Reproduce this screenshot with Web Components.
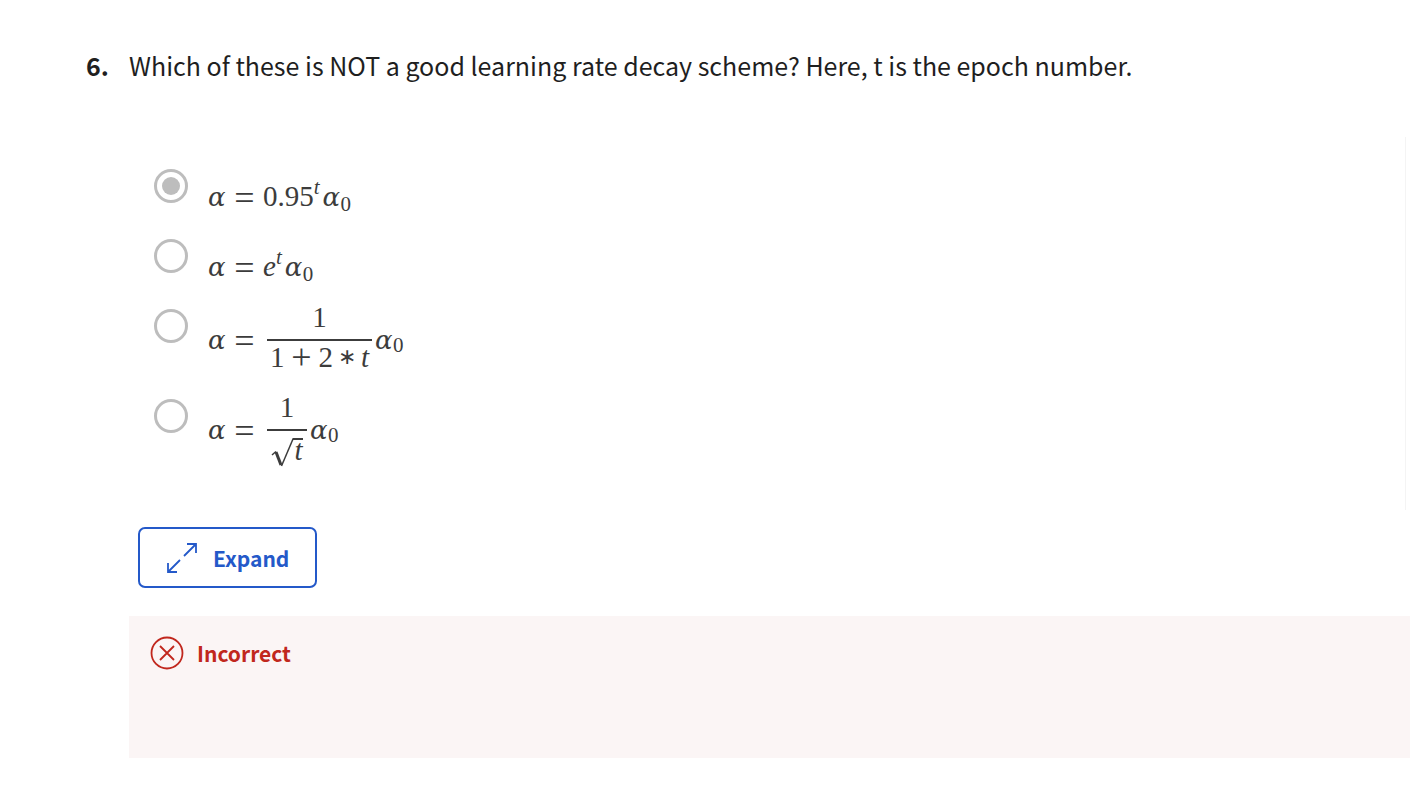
<!DOCTYPE html>
<html lang="en">
<head>
<meta charset="utf-8">
<meta name="viewport" content="width=device-width, initial-scale=1">
<title>Quiz question</title>
<style>
body { margin: 0; background: #fff; color: #1f1f1f; font-family: "Noto Sans CJK SC", "Open Sans", sans-serif; }
</style>
</head>
<body>
<quiz-question>
  <span slot="number">6.</span>
  <span slot="prompt">Which of these is NOT a good learning rate decay scheme? Here, t is the epoch number.</span>
  <quiz-options slot="options"></quiz-options>
  <expand-button slot="action">Expand</expand-button>
  <quiz-feedback slot="feedback">Incorrect</quiz-feedback>
</quiz-question>

<script>
const define = (name, html) => customElements.define(name, class extends HTMLElement {
  constructor() {
    super();
    this.attachShadow({ mode: "open" }).innerHTML = html;
  }
});

define("quiz-question", `
<style>
  :host { display: block; padding: 47px 0 38px 86px; }
  header { display: grid; grid-template-columns: 43px 1fr; font-size: 25px; line-height: 36px; }
  h2 { margin: 0; font: inherit; }
  .num { font-weight: 700; }
  .options { margin: 54px 4px 0 0; }
  .action { padding: 17px 0 0 52px; }
  .feedback { margin: 28px 0 0 43px; }
</style>
<header><span class="num"><slot name="number"></slot></span><h2><slot name="prompt"></slot></h2></header>
<div class="options"><slot name="options"></slot></div>
<div class="action"><slot name="action"></slot></div>
<div class="feedback"><slot name="feedback"></slot></div>
`);

define("math-frac", `
<style>
  :host { display: flex; flex-direction: column; align-items: stretch; text-align: center; margin: 0 3px 0 4px; }
  .top { padding-bottom: 6px; }
  .bottom { display: flex; justify-content: center; border-top: 2px solid #3c3c3c; }
</style>
<div class="top"><slot name="top"></slot></div>
<div class="bottom"><slot name="bottom"></slot></div>
`);

define("math-root", `
<style>
  :host { display: flex; padding: 0 3px 0 4px; }
  svg { display: block; overflow: visible; width: 33px; height: 32px; margin-right: -12px; }
  span { padding: 3px 0 0 1px; width: 11px; height: 29px; }
</style>
<svg viewBox="0 0 33 32" fill="none" stroke="#3c3c3c" aria-hidden="true">
  <path d="M1 24L5 20.5" stroke-width="1.5"/><path d="M5 21L10 34" stroke-width="3"/><path d="M10.5 35L22 8" stroke-width="1.5"/><path d="M21.5 8H32" stroke-width="2"/>
</svg><span><slot></slot></span>
`);

define("quiz-options", `
<style>
  :host { display: block; border-right: 1px solid #f4f4f4; }
  fieldset { display: grid; margin: 0; padding: 24px 0 29px 68px; border: 0; min-width: 0; }
  label { display: grid; grid-template-columns: 34px 1fr; column-gap: 20px; align-items: start; min-height: 70px; }
  label.tall { min-height: 90px; }
  input { appearance: none; display: grid; place-items: center; box-sizing: border-box; width: 34px; height: 34px; margin: 8px 0 0; border: 3px solid #bdbdbd; border-radius: 50%; background: #fff; }
  input:checked::before { content: ""; width: 18px; height: 18px; border-radius: 50%; background: #bdbdbd; }
  .math { display: flex; align-items: center; margin-top: 17px; color: #3c3c3c; font-family: "Liberation Serif", serif; font-size: 29px; line-height: 32px; white-space: nowrap; }
  .tall .math { margin-top: 0; }
  i { display: inline-block; }
  .a { width: 18px; padding-top: 2px; font-family: "DejaVu Serif", serif; font-size: 26px; }
  .eq, .op { text-align: center; font-size: 36px; }
  .eq { width: 37px; padding-top: 4px; }
  .op { width: 34px; }
  .tall .a { padding-top: 6px; }
  .tall .eq { padding-top: 8px; }
  .star { width: 28px; text-align: center; font-size: 22px; }
  sup, sub { font-size: 21px; line-height: 0; vertical-align: baseline; position: relative; }
  sup { top: -12px; margin-right: 3px; }
  sub { top: 5px; }
  .den { display: flex; align-items: center; padding: 0 3px; }
</style>
<fieldset aria-label="Answer choices">
  <label><input type="radio" name="scheme" checked>
    <span class="math"><i class="a">α</i><span class="eq">=</span><span>0.95<sup><i>t</i></sup></span><i class="a">α</i><span><sub>0</sub></span></span></label>
  <label><input type="radio" name="scheme">
    <span class="math"><i class="a">α</i><span class="eq">=</span><span><i>e</i><sup><i>t</i></sup></span><i class="a">α</i><span><sub>0</sub></span></span></label>
  <label class="tall"><input type="radio" name="scheme">
    <span class="math"><i class="a">α</i><span class="eq">=</span><math-frac><span slot="top">1</span><span slot="bottom" class="den"><span>1</span><span class="op">+</span><span>2</span><span class="star">∗</span><i>t</i></span></math-frac><i class="a">α</i><span><sub>0</sub></span></span></label>
  <label class="tall"><input type="radio" name="scheme">
    <span class="math"><i class="a">α</i><span class="eq">=</span><math-frac><span slot="top">1</span><math-root slot="bottom"><i>t</i></math-root></math-frac><i class="a">α</i><span><sub>0</sub></span></span></label>
</fieldset>
`);

define("expand-button", `
<style>
  :host { display: block; }
  button { display: flex; align-items: center; gap: 16px; height: 61px; padding: 0 26px 0 27px; border: 2px solid #2459c9; border-radius: 7px; background: #fff; color: #2459c9; font: 700 21px/32px "Noto Sans CJK SC", "Open Sans", sans-serif; }
  svg { width: 30px; height: 30px; }
</style>
<button type="button"><svg viewBox="0 0 30 30" fill="none" stroke="currentColor" stroke-width="1.8" aria-hidden="true"><path d="M17 13L29 1M20 1H29V10M13 17L1 29M1 20V29H10"/></svg><slot></slot></button>
`);

define("quiz-feedback", `
<style>
  :host { display: flex; align-items: flex-start; gap: 13px; min-height: 122px; padding: 20px 21px 0; background: #fbf5f5; color: #c1271d; font-size: 21px; font-weight: 700; line-height: 34px; }
  svg { width: 34px; height: 34px; }
</style>
<svg viewBox="0 0 34 34" fill="none" stroke="currentColor" stroke-width="1.8" aria-hidden="true"><circle cx="17" cy="17" r="15.5"/><path d="M10 10L24 24M24 10L10 24"/></svg><span><slot></slot></span>
`);
</script>
</body>
</html>
